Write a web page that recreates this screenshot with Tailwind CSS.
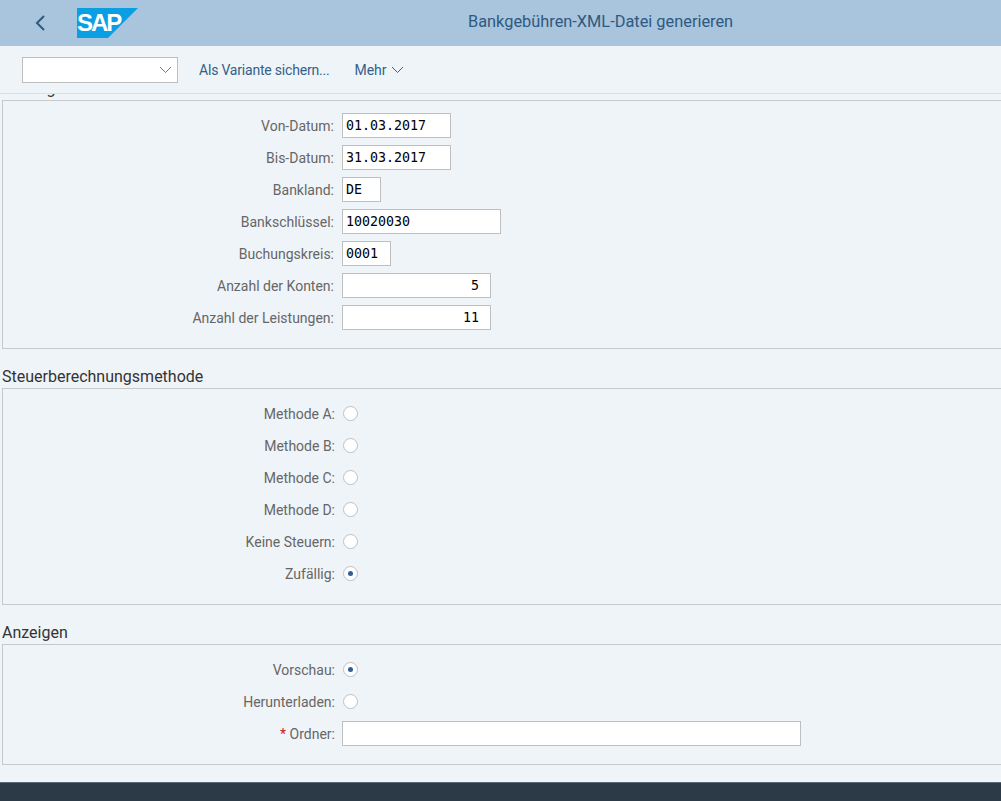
<!DOCTYPE html>
<html lang="de">
<head>
  <meta charset="UTF-8">
  <title>Bankgebühren-XML-Datei generieren</title>
  <script src="https://cdn.jsdelivr.net/npm/@tailwindcss/browser@4"></script>
</head>
<body class="h-screen flex flex-col overflow-hidden bg-[#eff4f9] font-['Roboto',sans-serif] text-[14px] text-[#666666]">
  <!-- Shell header -->
  <header class="h-[46px] shrink-0 flex items-center bg-[#a9c4dd]">
    <svg class="ml-[34px] w-[12px] h-[16px]" viewBox="0 0 12 16" fill="none" stroke="#2f5a80" stroke-width="2"><path d="M10 1 3 8l7 7"/></svg>
    <div class="relative ml-[31px] w-[61px] h-[30px]">
      <svg class="w-[61px] h-[30px]" viewBox="0 0 61 30"><polygon points="0,0 61,0 31,30 0,30" fill="#0a9fe3"/></svg>
      <span class="absolute left-[0px] top-[2px] font-['Liberation_Sans',sans-serif] font-bold text-[24px] leading-[26px] tracking-[-2px] text-white">SAP</span>
    </div>
    <h1 class="ml-[330px] -mt-[1px] text-[16.350px] text-[#2f5a80]">Bankgebühren-XML-Datei generieren</h1>
  </header>

  <!-- Toolbar -->
  <div class="relative z-10 h-[48px] shrink-0 flex items-center pl-[22px] bg-[#eff4f9] border-b border-[#d9dfe5]">
    <div class="w-[156px] h-[26px] flex items-center justify-end pr-[5px] bg-white border border-[#bfbfbf]">
      <svg class="w-[13px] h-[8px]" viewBox="0 0 13 8" fill="none" stroke="#5f7f9c"><path d="M1 1l5.500 5.500L12 1"/></svg>
    </div>
    <span class="ml-[21px] pt-[2px] tracking-[-0.200px] text-[#346187]">Als Variante sichern...</span>
    <span class="ml-[25px] pt-[2px] text-[#346187]">Mehr</span>
    <svg class="ml-[4px] w-[13px] h-[8px]" viewBox="0 0 13 8" fill="none" stroke="#346187"><path d="M1 1l5.500 5.500L12 1"/></svg>
  </div>

  <main class="flex-1 overflow-hidden">
    <!-- Section 1 -->
    <section class="ml-[2px] -mr-[10px] -mt-[15px]">
      <h2 class="h-[21px] leading-[19px] text-[16px] text-[#333333]">Zeitangaben</h2>
      <div class="flex flex-col gap-[7px] pt-[12px] pb-[18px] border border-[#c8c8c8]">
        <div class="flex items-center h-[25px]"><label class="w-[331px] pt-[2px] text-right">Von-Datum:</label><input value="01.03.2017" class="ml-[8px] w-[109px] h-[25px] pl-[3px] bg-white border border-[#bfbfbf] font-['DejaVu_Sans_Mono',monospace] text-[13.300px] text-black"></div>
        <div class="flex items-center h-[25px]"><label class="w-[331px] pt-[2px] text-right">Bis-Datum:</label><input value="31.03.2017" class="ml-[8px] w-[109px] h-[25px] pl-[3px] bg-white border border-[#bfbfbf] font-['DejaVu_Sans_Mono',monospace] text-[13.300px] text-black"></div>
        <div class="flex items-center h-[25px]"><label class="w-[331px] pt-[2px] text-right">Bankland:</label><input value="DE" class="ml-[8px] w-[39px] h-[25px] pl-[3px] bg-white border border-[#bfbfbf] font-['DejaVu_Sans_Mono',monospace] text-[13.300px] text-black"></div>
        <div class="flex items-center h-[25px]"><label class="w-[331px] pt-[2px] text-right">Bankschlüssel:</label><input value="10020030" class="ml-[8px] w-[159px] h-[25px] pl-[3px] bg-white border border-[#bfbfbf] font-['DejaVu_Sans_Mono',monospace] text-[13.300px] text-black"></div>
        <div class="flex items-center h-[25px]"><label class="w-[331px] pt-[2px] text-right">Buchungskreis:</label><input value="0001" class="ml-[8px] w-[49px] h-[25px] pl-[3px] bg-white border border-[#bfbfbf] font-['DejaVu_Sans_Mono',monospace] text-[13.300px] text-black"></div>
        <div class="flex items-center h-[25px]"><label class="w-[331px] pt-[2px] text-right">Anzahl der Konten:</label><input value="5" class="ml-[8px] w-[149px] h-[25px] pr-[11px] text-right bg-white border border-[#bfbfbf] font-['DejaVu_Sans_Mono',monospace] text-[13.300px] text-black"></div>
        <div class="flex items-center h-[25px]"><label class="w-[331px] pt-[2px] text-right">Anzahl der Leistungen:</label><input value="11" class="ml-[8px] w-[149px] h-[25px] pr-[11px] text-right bg-white border border-[#bfbfbf] font-['DejaVu_Sans_Mono',monospace] text-[13.300px] text-black"></div>
      </div>
    </section>

    <!-- Section 2 -->
    <section class="ml-[2px] -mr-[10px] mt-[18px]">
      <h2 class="h-[21px] leading-[19px] text-[16px] text-[#333333]">Steuerberechnungsmethode</h2>
      <div class="flex flex-col gap-[7px] pt-[12px] pb-[18px] border border-[#c8c8c8]">
        <div class="flex items-center h-[25px]"><label class="w-[332px] pt-[2px] text-right">Methode A:</label><span class="ml-[8px] w-[15px] h-[15px] rounded-full bg-white border border-[#bfbfbf]"></span></div>
        <div class="flex items-center h-[25px]"><label class="w-[332px] pt-[2px] text-right">Methode B:</label><span class="ml-[8px] w-[15px] h-[15px] rounded-full bg-white border border-[#bfbfbf]"></span></div>
        <div class="flex items-center h-[25px]"><label class="w-[332px] pt-[2px] text-right">Methode C:</label><span class="ml-[8px] w-[15px] h-[15px] rounded-full bg-white border border-[#bfbfbf]"></span></div>
        <div class="flex items-center h-[25px]"><label class="w-[332px] pt-[2px] text-right">Methode D:</label><span class="ml-[8px] w-[15px] h-[15px] rounded-full bg-white border border-[#bfbfbf]"></span></div>
        <div class="flex items-center h-[25px]"><label class="w-[332px] pt-[2px] text-right">Keine Steuern:</label><span class="ml-[8px] w-[15px] h-[15px] rounded-full bg-white border border-[#bfbfbf]"></span></div>
        <div class="flex items-center h-[25px]"><label class="w-[332px] pt-[2px] text-right">Zufällig:</label><span class="ml-[8px] w-[15px] h-[15px] rounded-full flex items-center justify-center bg-white border border-[#bfbfbf]"><span class="w-[5px] h-[5px] rounded-full bg-[#2f5f95]"></span></span></div>
      </div>
    </section>

    <!-- Section 3 -->
    <section class="ml-[2px] -mr-[10px] mt-[18px]">
      <h2 class="h-[21px] leading-[19px] text-[16px] text-[#333333]">Anzeigen</h2>
      <div class="flex flex-col gap-[7px] pt-[12px] pb-[18px] border border-[#c8c8c8]">
        <div class="flex items-center h-[25px]"><label class="w-[332px] pt-[2px] text-right">Vorschau:</label><span class="ml-[8px] w-[15px] h-[15px] rounded-full flex items-center justify-center bg-white border border-[#bfbfbf]"><span class="w-[5px] h-[5px] rounded-full bg-[#2f5f95]"></span></span></div>
        <div class="flex items-center h-[25px]"><label class="w-[332px] pt-[2px] text-right">Herunterladen:</label><span class="ml-[8px] w-[15px] h-[15px] rounded-full bg-white border border-[#bfbfbf]"></span></div>
        <div class="flex items-center h-[25px]"><label class="w-[332px] pt-[2px] text-right"><span class="text-[#cc1919]">*</span> Ordner:</label><input class="ml-[7px] w-[459px] h-[25px] bg-white border border-[#bfbfbf]"></div>
      </div>
    </section>
  </main>

  <!-- Footer bar -->
  <footer class="h-[19px] shrink-0 bg-[#2c3a47] border-t border-[#5b6b78]"></footer>
</body>
</html>
